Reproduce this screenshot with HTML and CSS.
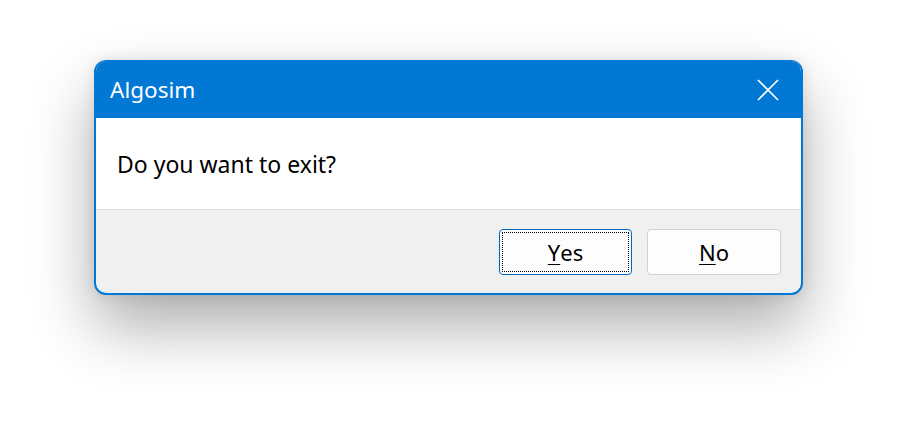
FILE: index.html
```html
<!DOCTYPE html>
<html>
<head>
<meta charset="utf-8">
<link rel="stylesheet" href="styles.css">
</head>
<body>
<div class="stage">
  <div class="dialog">
    <div class="titlebar">
      <span class="title">Algosim</span>
      <svg class="close" width="22" height="22" viewBox="0 0 22 22"><path d="M1 1 L21 21 M21 1 L1 21" stroke="#fff" stroke-width="1.6" fill="none"/></svg>
    </div>
    <div class="content">Do you want to exit?</div>
    <div class="footer">
      <button class="btn btn-default"><span class="focus"><u>Y</u>es</span></button>
      <button class="btn"><span class="focus-none"><u>N</u>o</span></button>
    </div>
  </div>
</div>
</body>
</html>
```
FILE: styles.css
```css
html, body { margin: 0; padding: 0; background: #fff; }
body { width: 898px; height: 446px; overflow: hidden; font-family: "Noto Sans", "Open Sans", sans-serif; }
.stage { padding: 60px 0 0 94px; }
.dialog {
  width: 705px;
  height: 232px;
  border: 2px solid #0078d4;
  border-top-width: 1px;
  border-radius: 12px;
  overflow: hidden;
  display: flex;
  flex-direction: column;
  box-shadow: 0 32px 64px rgba(0,0,0,0.32), 0 0 14px rgba(0,0,0,0.10);
  background: #f0f0f0;
}
.titlebar {
  height: 57px;
  background: #0078d4;
  display: flex;
  align-items: center;
  justify-content: space-between;
  padding: 0 22px 0 14px;
  color: #fff;
}
.title { font-size: 22.5px; line-height: 1; position: relative; top: 1px; }
.content {
  height: 92px;
  background: #fff;
  border-bottom: 1px solid #dfdfdf;
  box-sizing: border-box;
  padding: 0 0 0 21px;
  display: flex;
  align-items: center;
  font-size: 23px;
  color: #000;
}
.footer {
  flex: 1;
  display: flex;
  justify-content: flex-end;
  align-items: flex-start;
  gap: 15px;
  padding: 19px 20px 0 0;
}
.btn {
  width: 134px;
  height: 46px;
  border: 1px solid #d0d0d0;
  border-radius: 4px;
  background: #fdfdfd;
  font-family: inherit;
  font-size: 22px;
  color: #000;
  padding: 2px;
  margin: 0;
}
.btn u { text-decoration-thickness: 1px; text-underline-offset: 3px; }
.btn-default { width: 133px; border-color: #0067c0; }
.focus, .focus-none {
  display: flex;
  align-items: center;
  justify-content: center;
  width: 100%;
  height: 100%;
  box-sizing: border-box;
  border: 1px dotted transparent;
}
.focus { border-color: #000; }
```
